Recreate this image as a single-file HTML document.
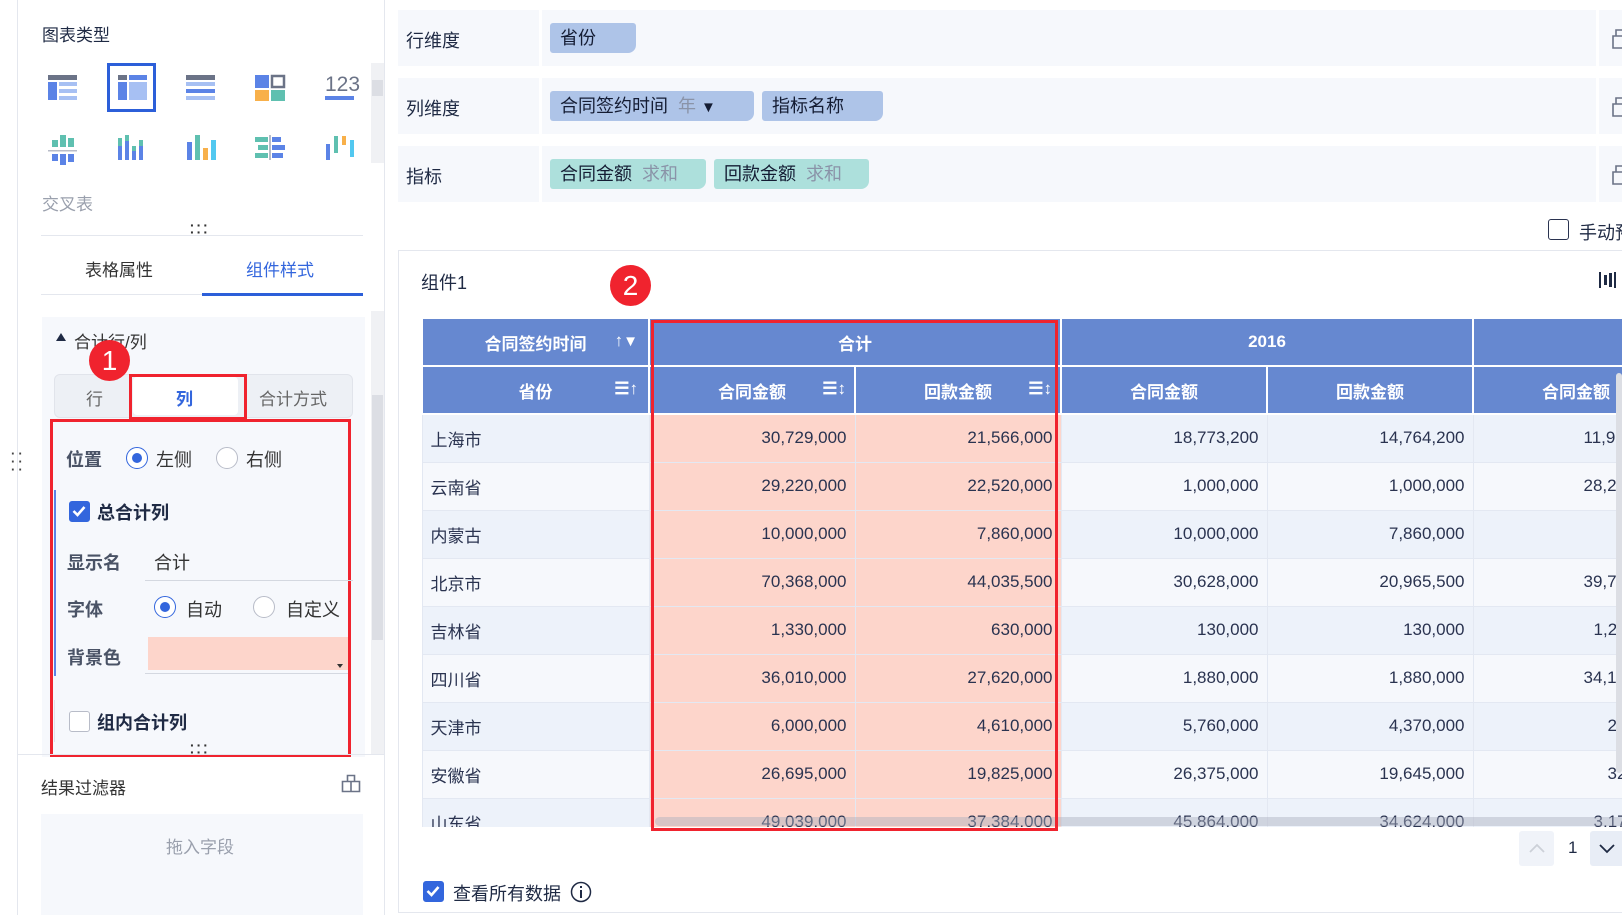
<!DOCTYPE html>
<html><head><meta charset="utf-8">
<style>
*{margin:0;padding:0;box-sizing:border-box}
body{width:1622px;height:915px;overflow:hidden;background:#fff;font-family:"Liberation Sans","Noto Sans CJK SC",sans-serif;color:#1f2a44;position:relative;font-size:17px}
.a{position:absolute;white-space:nowrap}
.lbl{font-size:17px;line-height:20px}
.radio{position:absolute;width:22px;height:22px;border-radius:50%;border:1.5px solid #b8bcc8;background:#fff}
.radio.on{border-color:#3366dd}
.radio.on:after{content:"";position:absolute;left:4.5px;top:4.5px;width:10px;height:10px;border-radius:50%;background:#3366dd}
.cb{position:absolute;width:21px;height:21px;border-radius:3px;border:1.5px solid #b8bcc8;background:#fff}
.cb.on{background:#3366dd;border-color:#3366dd}
.tag{position:absolute;height:30px;line-height:30px;padding-left:10px;border-radius:3px 3px 8px 3px;font-size:18px;color:#141c33}
.row{position:absolute;left:398px;width:1224px;background:#f6f8fc}
table{border-collapse:collapse;table-layout:fixed}
td{height:48px;font-size:17px;border:1px solid #e3e8f2;padding:0 8px;text-align:right;color:#2a3350}
tr.h td{background:#6688d0;color:#fff;font-weight:bold;text-align:center;border:2px solid #fff}
tr.o td{background:#edf2fa}
tr.e td{background:#f6f8fc}
td.p{background:#fdd5cb!important}
td.f{text-align:left}
</style></head><body>
<!-- left panel -->
<div class="a" style="left:17px;top:0;width:1px;height:915px;background:#e4e7ee"></div>
<div class="a lbl" style="left:42px;top:26px">图表类型</div>
<svg class="a" style="left:40px;top:60px" width="330" height="110" viewBox="0 0 330 110">
 <rect x="8" y="15" width="29" height="5" fill="#6b7387"/><rect x="8" y="22" width="9" height="18" fill="#5b83e6"/><rect x="19" y="22" width="18" height="4" fill="#a7c0f3"/><rect x="19" y="29" width="18" height="4" fill="#a7c0f3"/><rect x="19" y="36" width="18" height="4" fill="#a7c0f3"/>
 <rect x="68.5" y="4.5" width="46" height="46" fill="none" stroke="#2c5fd9" stroke-width="3"/>
 <rect x="78" y="15" width="9" height="5" fill="#6b7387"/><rect x="89" y="15" width="18" height="5" fill="#5b83e6"/><rect x="78" y="22" width="9" height="18" fill="#5b83e6"/><rect x="89" y="22" width="18" height="18" fill="#a7c0f3"/>
 <rect x="146" y="15" width="29" height="5" fill="#6b7387"/><rect x="146" y="22" width="29" height="4" fill="#a7c0f3"/><rect x="146" y="29" width="29" height="4" fill="#5b83e6"/><rect x="146" y="36" width="29" height="4" fill="#a7c0f3"/>
 <rect x="215" y="15" width="14" height="13" fill="#5b83e6"/><rect x="232" y="16" width="12" height="11" fill="none" stroke="#6b7387" stroke-width="2.5"/><rect x="215" y="30" width="14" height="11" fill="#f8b04a"/><rect x="231" y="30" width="14" height="11" fill="#5fc0b0"/>
 <text x="285" y="31" font-family="Liberation Sans" font-size="21" fill="#6b7387">123</text><rect x="285" y="36" width="29" height="4" fill="#5b83e6"/>
 <rect x="8" y="90" width="29" height="1.5" fill="#b8bcc8"/><rect x="12" y="80" width="6" height="7" fill="#5fc0b0"/><rect x="20" y="75" width="6" height="12" fill="#5fc0b0"/><rect x="28" y="78" width="6" height="9" fill="#5fc0b0"/><rect x="12" y="94" width="6" height="7" fill="#5b83e6"/><rect x="20" y="94" width="6" height="11" fill="#5b83e6"/><rect x="28" y="94" width="6" height="8" fill="#5b83e6"/>
 <rect x="78" y="78" width="4" height="8" fill="#5fc0b0"/><rect x="78" y="86" width="4" height="14" fill="#5b83e6"/><rect x="85" y="75" width="4" height="6" fill="#5fc0b0"/><rect x="85" y="81" width="4" height="19" fill="#5b83e6"/><rect x="92" y="86" width="4" height="5" fill="#5fc0b0"/><rect x="92" y="91" width="4" height="9" fill="#5b83e6"/><rect x="99" y="80" width="4" height="6" fill="#5fc0b0"/><rect x="99" y="86" width="4" height="14" fill="#5b83e6"/>
 <rect x="147" y="82" width="5" height="18" fill="#5b83e6"/><rect x="155" y="75" width="5" height="25" fill="#5fc0b0"/><rect x="163" y="88" width="5" height="12" fill="#f8b04a"/><rect x="171" y="80" width="5" height="20" fill="#52c8f0"/>
 <rect x="215" y="77" width="13" height="5" fill="#5fc0b0"/><rect x="218" y="85" width="10" height="5" fill="#5fc0b0"/><rect x="215" y="93" width="13" height="5" fill="#5fc0b0"/><rect x="229" y="75" width="2" height="25" fill="#b8bcc8"/><rect x="232" y="77" width="9" height="5" fill="#5b83e6"/><rect x="232" y="85" width="13" height="5" fill="#5b83e6"/><rect x="232" y="93" width="11" height="5" fill="#5b83e6"/>
 <rect x="286" y="84" width="4" height="16" fill="#5b83e6"/><rect x="294" y="76" width="4" height="17" fill="#5fc0b0"/><rect x="302" y="76" width="4" height="9" fill="#f8b04a"/><rect x="310" y="80" width="4" height="17" fill="#52c8f0"/>
</svg>
<div class="a" style="left:371px;top:63px;width:13px;height:100px;background:#f0f1f4"></div>
<div class="a" style="left:372px;top:80px;width:11px;height:16px;background:#dcdee4"></div>
<div class="a" style="left:42px;top:190px;font-size:17px;color:#9aa0ad">交叉表</div>
<div class="a" style="left:190px;top:222px;font-size:14px;letter-spacing:2px;color:#333;line-height:7px;font-weight:bold">···<br>···</div>
<div class="a" style="left:41px;top:235px;width:322px;height:1px;background:#e4e7ee"></div>
<div class="a" style="left:85px;top:256px;font-size:17px;color:#333">表格属性</div>
<div class="a" style="left:246px;top:256px;font-size:17px;color:#3366dd">组件样式</div>
<div class="a" style="left:41px;top:294px;width:162px;height:1px;background:#e4e7ee"></div>
<div class="a" style="left:202px;top:293px;width:161px;height:3px;background:#2c5fd9"></div>
<!-- settings panel -->
<div class="a" style="left:42px;top:317px;width:323px;height:440px;background:#f6f8fc"></div>
<div class="a" style="left:371px;top:311px;width:13px;height:444px;background:#f0f1f4"></div>
<div class="a" style="left:372px;top:395px;width:11px;height:245px;background:#dcdee4"></div>
<div class="a" style="left:56px;top:333px;width:0;height:0;border-left:5px solid transparent;border-right:5px solid transparent;border-bottom:8px solid #1f2a44"></div>
<div class="a" style="left:74px;top:328px;font-size:17px;color:#333">合计行/列</div>
<div class="a" style="left:54px;top:374px;width:299px;height:44px;background:#edf0f5;border:1px solid #e1e4eb;border-radius:6px"></div>
<div class="a" style="left:133px;top:377px;width:105px;height:38px;background:#fff;border-radius:4px"></div>
<div class="a" style="left:86px;top:385px;font-size:17px;color:#666">行</div>
<div class="a" style="left:176px;top:385px;font-size:17px;color:#3366dd;font-weight:bold">列</div>
<div class="a" style="left:259px;top:385px;font-size:17px;color:#666">合计方式</div>
<div class="a" style="left:129px;top:374px;width:118px;height:46px;border:3px solid #f0232e"></div>
<div class="a" style="left:89px;top:340px;width:41px;height:41px;border-radius:50%;background:#f0232e;color:#fff;font-size:28px;text-align:center;line-height:41px">1</div>
<div class="a" style="left:50px;top:419px;width:301px;height:338px;border:3px solid #f0232e"></div>
<div class="a" style="left:66px;top:446px;font-size:18px;font-weight:bold;color:#4a5366">位置</div>
<div class="radio on" style="left:126px;top:447px"></div><div class="a" style="left:156px;top:446px;font-size:18px;color:#333">左侧</div>
<div class="radio" style="left:216px;top:447px"></div><div class="a" style="left:246px;top:446px;font-size:18px;color:#333">右侧</div>
<div class="a" style="left:54px;top:490px;width:1.5px;height:186px;background:#5b83e6"></div>
<div class="cb on" style="left:69px;top:501px"><svg width="18" height="18" viewBox="0 0 18 18" style="position:absolute;left:0;top:0"><path d="M3.5 9 L7.5 13 L14.5 5" fill="none" stroke="#fff" stroke-width="2.6"/></svg></div>
<div class="a" style="left:97px;top:499px;font-size:18px;font-weight:bold;color:#1f2a44">总合计列</div>
<div class="a" style="left:67px;top:549px;font-size:18px;font-weight:bold;color:#4a5366">显示名</div>
<div class="a" style="left:154px;top:549px;font-size:18px;color:#333">合计</div>
<div class="a" style="left:145px;top:580px;width:208px;height:1px;background:#d4d8e0"></div>
<div class="a" style="left:67px;top:596px;font-size:18px;font-weight:bold;color:#4a5366">字体</div>
<div class="radio on" style="left:154px;top:596px"></div><div class="a" style="left:186px;top:596px;font-size:18px;color:#333">自动</div>
<div class="radio" style="left:253px;top:596px"></div><div class="a" style="left:286px;top:596px;font-size:18px;color:#333">自定义</div>
<div class="a" style="left:67px;top:644px;font-size:18px;font-weight:bold;color:#4a5366">背景色</div>
<div class="a" style="left:148px;top:637px;width:200px;height:33px;background:#fdd5cb"></div>
<div class="a" style="left:337px;top:664px;width:0;height:0;border-left:3px solid transparent;border-right:3px solid transparent;border-top:4px solid #333"></div>
<div class="a" style="left:145px;top:673px;width:203px;height:1px;background:#d4d8e0"></div>
<div class="a" style="left:54px;top:700px;width:1px;height:42px;background:#dfe2e8"></div>
<div class="cb" style="left:69px;top:711px"></div>
<div class="a" style="left:97px;top:709px;font-size:18px;font-weight:bold;color:#1f2a44">组内合计列</div>
<div class="a" style="left:190px;top:742px;font-size:14px;letter-spacing:2px;color:#333;line-height:7px;font-weight:bold">···<br>···</div>
<div class="a" style="left:17px;top:754px;width:367px;height:1px;background:#e4e7ee"></div>
<div class="a" style="left:11px;top:450px;font-size:13px;line-height:8px;color:#444;letter-spacing:3px;font-weight:bold">··<br>··<br>··</div>
<div class="a" style="left:41px;top:774px;font-size:17px;color:#333">结果过滤器</div>
<svg class="a" style="left:341px;top:773px" width="20" height="20" viewBox="0 0 20 20"><path d="M1.5 8.5h17v10h-17z M6.5 8.5v-6h7v6 M10 8.5v10" fill="none" stroke="#6b7387" stroke-width="1.6"/></svg>
<div class="a" style="left:41px;top:814px;width:322px;height:101px;background:#f6f8fc"></div>
<div class="a" style="left:166px;top:833px;font-size:17px;color:#9aa0ad">拖入字段</div>
<div class="a" style="left:384px;top:0;width:1px;height:915px;background:#e4e7ee"></div>
<!-- right dims -->
<div class="row" style="top:10px;height:56px"></div>
<div class="row" style="top:78px;height:56px"></div>
<div class="row" style="top:146px;height:56px"></div>
<div class="a" style="left:539px;top:10px;width:3px;height:192px;background:#fff"></div>
<div class="a" style="left:1596px;top:10px;width:3px;height:192px;background:#fff"></div>
<div class="a" style="left:406px;top:27px;font-size:18px">行维度</div>
<div class="a" style="left:406px;top:95px;font-size:18px">列维度</div>
<div class="a" style="left:406px;top:163px;font-size:18px">指标</div>
<div class="tag" style="left:550px;top:23px;width:86px;background:#aec4e8">省份</div>
<div class="tag" style="left:550px;top:91px;width:204px;background:#aec4e8">合同签约时间 <span style="color:#8a93a8">&nbsp;年</span> <span style="font-size:15px">▼</span></div>
<div class="tag" style="left:762px;top:91px;width:121px;background:#aec4e8">指标名称</div>
<div class="tag" style="left:550px;top:159px;width:156px;background:#ade0dc">合同金额 <span style="color:#8a93a8">&nbsp;求和</span></div>
<div class="tag" style="left:714px;top:159px;width:155px;background:#ade0dc">回款金额 <span style="color:#8a93a8">&nbsp;求和</span></div>
<svg class="a" style="left:1612px;top:28px" width="12" height="160" viewBox="0 0 12 160"><g fill="none" stroke="#6b7387" stroke-width="1.6"><path d="M1 8h12v12H1z M4 8V2h8"/><path d="M1 76h12v12H1z M4 76v-6h8"/><path d="M1 144h12v12H1z M4 144v-6h8"/></g></svg>
<div class="cb" style="left:1548px;top:219px;border-color:#2a3350;border-width:1.5px"></div>
<div class="a" style="left:1579px;top:219px;font-size:18px;color:#1f2a44">手动预</div>
<!-- card -->
<div class="a" style="left:398px;top:250px;width:1230px;height:663px;border:1.5px solid #e4e7ee"></div>
<div class="a" style="left:421px;top:269px;font-size:18px;color:#1f2a44">组件1</div>
<svg class="a" style="left:1598px;top:270px" width="20" height="20" viewBox="0 0 20 20"><g fill="#1f2a44"><rect x="1" y="2" width="2" height="16"/><rect x="6" y="5" width="3" height="10"/><rect x="11" y="3" width="3" height="14"/><rect x="16" y="2" width="2" height="16"/></g></svg>
<div class="a" style="left:610px;top:265px;width:41px;height:41px;border-radius:50%;background:#f0232e;color:#fff;font-size:28px;text-align:center;line-height:41px">2</div>
<!-- table -->
<div class="a" style="left:421px;top:317px;width:1201px;height:510px;overflow:hidden">
<table style="width:1257px">
<colgroup><col style="width:227px"><col style="width:206px"><col style="width:206px"><col style="width:206px"><col style="width:206px"><col style="width:206px"></colgroup>
<tr class="h"><td style="height:47px;position:relative">合同签约时间<span style="position:absolute;right:10px;top:12px">↑<span style="font-size:15px">▼</span></span></td><td colspan="2">合计</td><td colspan="2">2016</td><td></td></tr>
<tr class="h"><td style="height:48px;position:relative">省份<span style="position:absolute;right:10px;top:12px">☰↑</span></td><td style="position:relative">合同金额<span style="position:absolute;right:8px;top:12px">☰↕</span></td><td style="position:relative">回款金额<span style="position:absolute;right:8px;top:12px">☰↕</span></td><td>合同金额</td><td>回款金额</td><td>合同金额</td></tr>
<tr class="o"><td class="f">上海市</td><td class="p">30,729,000</td><td class="p">21,566,000</td><td>18,773,200</td><td>14,764,200</td><td style="text-align:left;padding-left:110px">11,950,000</td></tr>
<tr class="e"><td class="f">云南省</td><td class="p">29,220,000</td><td class="p">22,520,000</td><td>1,000,000</td><td>1,000,000</td><td style="text-align:left;padding-left:110px">28,220,000</td></tr>
<tr class="o"><td class="f">内蒙古</td><td class="p">10,000,000</td><td class="p">7,860,000</td><td>10,000,000</td><td>7,860,000</td><td></td></tr>
<tr class="e"><td class="f">北京市</td><td class="p">70,368,000</td><td class="p">44,035,500</td><td>30,628,000</td><td>20,965,500</td><td style="text-align:left;padding-left:110px">39,740,000</td></tr>
<tr class="o"><td class="f">吉林省</td><td class="p">1,330,000</td><td class="p">630,000</td><td>130,000</td><td>130,000</td><td style="text-align:left;padding-left:120px">1,200,000</td></tr>
<tr class="e"><td class="f">四川省</td><td class="p">36,010,000</td><td class="p">27,620,000</td><td>1,880,000</td><td>1,880,000</td><td style="text-align:left;padding-left:110px">34,130,000</td></tr>
<tr class="o"><td class="f">天津市</td><td class="p">6,000,000</td><td class="p">4,610,000</td><td>5,760,000</td><td>4,370,000</td><td style="text-align:left;padding-left:134px">240,000</td></tr>
<tr class="e"><td class="f">安徽省</td><td class="p">26,695,000</td><td class="p">19,825,000</td><td>26,375,000</td><td>19,645,000</td><td style="text-align:left;padding-left:134px">320,000</td></tr>
<tr class="o"><td class="f">山东省</td><td class="p">49,039,000</td><td class="p">37,384,000</td><td>45,864,000</td><td>34,624,000</td><td style="text-align:left;padding-left:120px">3,175,000</td></tr>
</table>
<div class="a" style="left:234px;top:500px;width:1000px;height:9px;border-radius:5px;background:rgba(170,175,190,0.45)"></div>
<div class="a" style="left:1195px;top:56px;width:6px;height:400px;border-radius:3px;background:#dcdee4"></div>
</div>
<div class="a" style="left:651px;top:320px;width:407px;height:511px;border:3px solid #f0232e"></div>
<!-- pagination -->
<div class="a" style="left:1519px;top:831px;width:35px;height:35px;background:#f0f3f9;border-radius:3px"></div>
<svg class="a" style="left:1527px;top:840px" width="20" height="16"><path d="M3 12 L10 5 L17 12" fill="none" stroke="#ccd0d8" stroke-width="1.8"/></svg>
<div class="a" style="left:1568px;top:838px;font-size:17px">1</div>
<div class="a" style="left:1590px;top:831px;width:35px;height:35px;background:#e8edf6;border-radius:3px"></div>
<svg class="a" style="left:1597px;top:840px" width="20" height="16"><path d="M3 5 L10 12 L17 5" fill="none" stroke="#1f2a44" stroke-width="1.8"/></svg>
<!-- footer -->
<div class="cb on" style="left:423px;top:881px"><svg width="18" height="18" viewBox="0 0 18 18" style="position:absolute;left:0;top:0"><path d="M3.5 9 L7.5 13 L14.5 5" fill="none" stroke="#fff" stroke-width="2.6"/></svg></div>
<div class="a" style="left:453px;top:880px;font-size:18px">查看所有数据</div>
<svg class="a" style="left:570px;top:881px" width="22" height="22"><circle cx="11" cy="11" r="9.5" fill="none" stroke="#1f2a44" stroke-width="1.5"/><rect x="10" y="9" width="2" height="8" fill="#1f2a44"/><rect x="10" y="5" width="2" height="2" fill="#1f2a44"/></svg>
</body></html>
